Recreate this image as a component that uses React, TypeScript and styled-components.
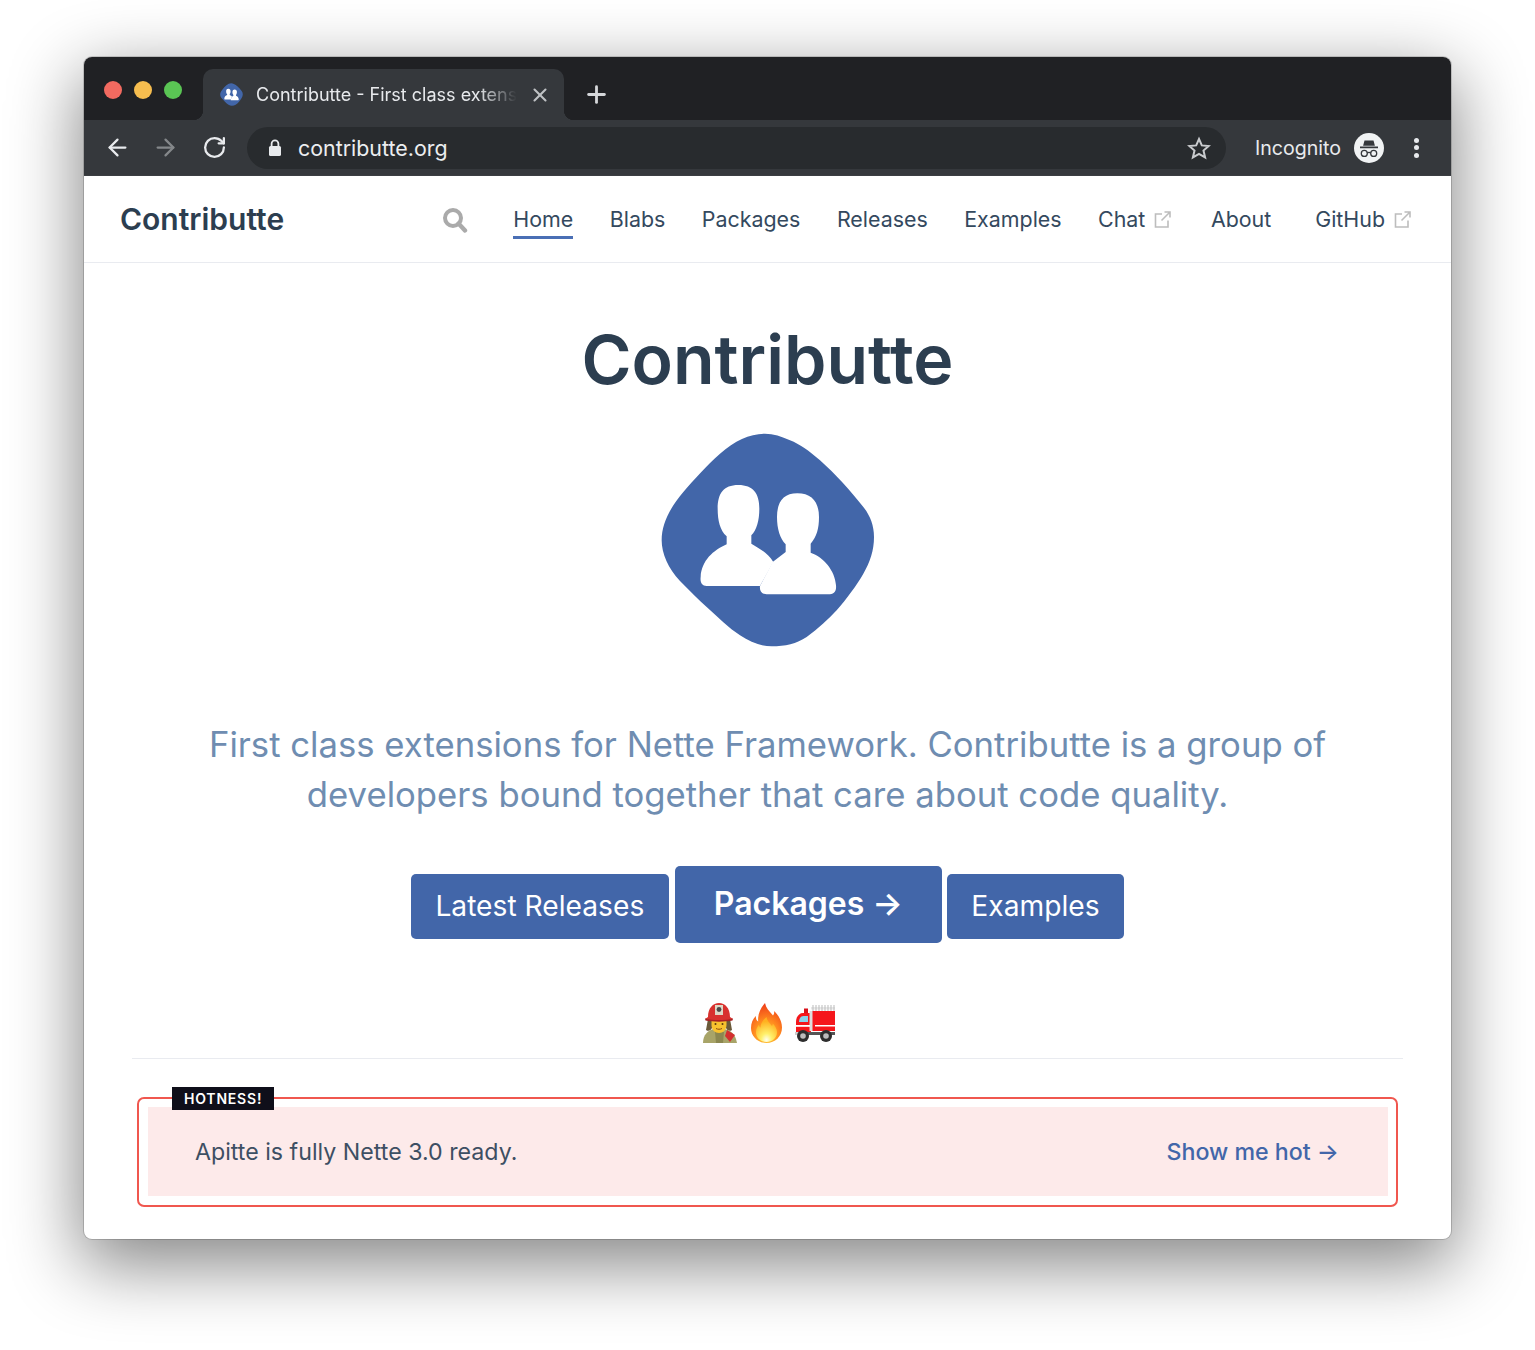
import React from "react";
import styled, { createGlobalStyle } from "styled-components";
import { ArrowLeft, ArrowRight, RotateCw, Plus, X } from "lucide-react";

const Global = createGlobalStyle`
  html, body { margin: 0; padding: 0; background: #fff; }
  body { font-family: Inter, "Noto Sans", sans-serif; overflow: hidden; -webkit-font-smoothing: antialiased; }
  * { box-sizing: border-box; }
`;

const Page = styled.div`
  width: 1535px;
  height: 1350px;
  padding: 57px 84px 0;
  overflow: hidden;
`;
const BrowserWindow = styled.div`
  width: 1367px;
  height: 1182px;
  border-radius: 8px;
  background: #fff;
  box-shadow: 0 22px 70px 4px rgba(0, 0, 0, 0.48), 0 0 0 1px rgba(0, 0, 0, 0.16);
  overflow: hidden;
`;
const TabStrip = styled.div`
  height: 63px;
  background: #202124;
  display: flex;
  align-items: flex-end;
  padding-left: 20px;
`;
const Lights = styled.div`
  display: flex;
  gap: 12px;
  align-self: flex-start;
  margin-top: 24px;
  margin-right: 21px;
`;
const Light = styled.span<{ $c: string }>`
  width: 18px;
  height: 18px;
  border-radius: 50%;
  background: ${(p) => p.$c};
`;
const Tab = styled.div`
  position: relative;
  width: 361px;
  height: 51px;
  background: #35383c;
  border-radius: 10px 10px 0 0;
  display: flex;
  align-items: center;
  padding: 0 13px 0 17px;
  color: #e8eaed;
  &::before, &::after {
    content: "";
    position: absolute;
    bottom: 0;
    width: 10px;
    height: 10px;
  }
  &::before { left: -10px; background: radial-gradient(circle at 0 0, #202124 10px, #35383c 10.5px); }
  &::after { right: -10px; background: radial-gradient(circle at 100% 0, #202124 10px, #35383c 10.5px); }
`;
const TabTitle = styled.span`
  margin-left: 13px;
  font-size: 18px;
  white-space: nowrap;
  -webkit-mask-image: linear-gradient(to right, #000 85%, transparent 100%);
  mask-image: linear-gradient(to right, #000 85%, transparent 100%);
`;
const TabClose = styled(X)`
  margin-left: auto;
  color: #bfc1c4;
`;
const NewTab = styled.div`
  margin-left: 19px;
  align-self: flex-start;
  margin-top: 24px;
  color: #d5d7da;
  display: flex;
`;
const Toolbar = styled.div`
  height: 56px;
  background: #35383c;
  display: flex;
  align-items: center;
  padding: 0 21px 0 20px;
  color: #e8eaed;
  border-bottom: 1px solid #3b3e42;
`;
const NavIcons = styled.div`
  display: flex;
  gap: 21px;
  align-items: center;
  margin-right: 20px;
`;
const Reload = styled(RotateCw)`
  margin-left: 2px;
`;
const Omnibox = styled.div`
  width: 979px;
  height: 42px;
  border-radius: 21px;
  background: #282b2e;
  display: flex;
  align-items: center;
  padding: 0 15px 0 21px;
  font-size: 21.4px;
  color: #eceef0;
`;
const Url = styled.span`
  margin-left: 16px;
  flex: 1;
`;
const Incognito = styled.div`
  margin-left: 29px;
  display: flex;
  align-items: center;
  font-size: 19.6px;
  color: #e8eaed;
  gap: 13px;
`;
const Dots = styled.div`
  margin-left: 30px;
  display: flex;
  flex-direction: column;
  gap: 2.5px;
  & > span { width: 5px; height: 5px; border-radius: 50%; background: #e8eaed; }
`;
const Nav = styled.nav`
  height: 87px;
  display: flex;
  align-items: center;
  padding: 0 40px 0 36px;
  border-bottom: 1px solid #e9ebf0;
  color: #2d3e50;
`;
const Brand = styled.div`
  font-size: 30px;
  font-weight: 600;
  color: #2c3e50;
  margin-right: auto;
`;
const SearchBtn = styled.div`
  display: flex;
  margin-right: 45px;
  padding-top: 2px;
`;
const NavLinks = styled.div`
  display: flex;
  align-items: center;
`;
const NavLink = styled.a<{ $active?: boolean; $gap?: number }>`
  position: relative;
  font-size: 21.4px;
  color: #34495e;
  margin-right: ${(p) => p.$gap ?? 36.5}px;
  display: flex;
  align-items: center;
  gap: 9px;
  ${(p) =>
    p.$active &&
    `&::after { content: ""; position: absolute; left: 0; right: 0; bottom: -7px; height: 3px; background: #4a6fb5; }`}
`;
const Main = styled.main`
  padding: 55.5px 48px 0;
  text-align: center;
`;
const Title = styled.h1`
  margin: 0;
  font-size: 68px;
  line-height: 80px;
  font-weight: 600;
  color: #2c3e50;
`;
const LogoWrap = styled.div`
  display: flex;
  justify-content: center;
  margin-top: 33px;
`;
const Lead = styled.p`
  margin: 71.5px 0 0;
  font-size: 34.7px;
  line-height: 50px;
  color: #6f8db1;
`;
const Actions = styled.div`
  display: flex;
  justify-content: center;
  align-items: center;
  gap: 6px;
  margin-top: 47px;
`;
const Button = styled.a<{ $big?: boolean }>`
  background: #4266a9;
  color: #fff;
  border-radius: 5px;
  display: flex;
  align-items: center;
  height: ${(p) => (p.$big ? 77 : 65)}px;
  padding: 0 ${(p) => (p.$big ? 39 : 24.5)}px 2px;
  margin: 0 ${(p) => (p.$big ? -1 : 0)}px ${(p) => (p.$big ? 4 : 0)}px 0;
  font-size: ${(p) => (p.$big ? 32 : 28.2)}px;
  font-weight: ${(p) => (p.$big ? 600 : 400)};
`;
const Emojis = styled.div`
  display: flex;
  justify-content: center;
  gap: 11px;
  margin-top: 56px;
  padding: 0 0 15px 2px;
  border-bottom: 1px solid #e9ebf0;
`;
const Hot = styled.section`
  position: relative;
  margin: 38px 5px 0;
  height: 110px;
  border: 2px solid #f0574f;
  border-radius: 7px;
  padding: 8px 8px 8px 9px;
`;
const Badge = styled.span`
  position: absolute;
  left: 33px;
  top: -12px;
  background: #0f0f1a;
  color: #fff;
  font-size: 14px;
  font-weight: 600;
  letter-spacing: 0.8px;
  height: 23px;
  padding: 0 12px;
  display: flex;
  align-items: center;
`;
const HotBody = styled.div`
  height: 89px;
  background: #fdeaea;
  display: flex;
  align-items: center;
  justify-content: space-between;
  padding: 0 49px 0 47px;
  font-size: 23.2px;
  color: #3d4f63;
`;
const HotLink = styled.a`
  color: #4266a9;
  font-weight: 500;
`;

const Logo = ({ size, fill = "#4266a9" }: { size: number; fill?: string }) => (
  <svg width={size} height={size} viewBox="60 35 648 648">
    <path
      fill={fill}
      d="M375 40C330 40 285 60 240 100C200 135 160 180 130 215C90 262 65 310 65 360C65 400 85 445 120 482C150 512 175 538 200 560C235 592 265 622 300 645C330 665 360 678 395 678C435 678 470 670 500 650C535 625 565 597 590 570C620 535 650 495 670 460C690 425 702 390 702 350C702 315 690 285 670 260C630 210 585 160 540 120C505 90 480 72 450 60C425 48 400 40 375 40Z"
    />
    <path
      fill="#fff"
      d="M295 194C340 194 358 220 358 265C358 300 350 330 334 345L334 370C360 385 385 400 400 425L360 497L200 497C185 497 180 485 182 470C185 420 220 390 260 372L260 348C240 330 233 300 233 265C233 220 250 194 295 194Z"
    />
    <path
      fill="#fff"
      d="M472 219C515 219 537 245 537 290C537 325 530 350 512 370L512 397C550 410 585 450 588 495C590 515 580 522 565 522L380 522C365 522 358 512 360 497L398 425L437 395L437 372C420 355 411 325 411 290C411 245 430 219 472 219Z"
    />
  </svg>
);

const LockIcon = () => (
  <svg width="14" height="18" viewBox="0 0 14 18">
    <path fill="none" stroke="#e8eaed" strokeWidth="1.8" d="M3.6 8V4.8a3.4 3.4 0 0 1 6.8 0V8" />
    <rect x="1" y="7" width="12" height="10" rx="1.6" fill="#e8eaed" />
  </svg>
);

const StarIcon = () => (
  <svg width="24" height="24" viewBox="0 0 24 24" fill="none" stroke="#c8cacd" strokeWidth="2" strokeLinejoin="miter">
    <path d="M12 3l2.800 6.400 6.900.6-5.200 4.600 1.600 6.800L12 17.800l-6.100 3.600 1.600-6.800L2.300 10l6.900-.6z" />
  </svg>
);

const SearchIcon = () => (
  <svg width="26" height="26" viewBox="0 0 26 26" fill="none" stroke="#aaaaaa">
    <circle cx="11" cy="11" r="8" strokeWidth="4" />
    <path d="M16.5 16.5L23 23.5" strokeWidth="4.4" strokeLinecap="round" />
  </svg>
);

const ExtIcon = () => (
  <svg width="17" height="17" viewBox="0 0 17 17" fill="none" stroke="#bdbdbd" strokeWidth="1.6">
    <path d="M8 3H1.500V16H14V9.500" />
    <path d="M7.500 9.500L15.500 1.500M10.500 1H16V6.500" />
  </svg>
);

const IncognitoIcon = () => (
  <svg width="30" height="30" viewBox="0 0 30 30">
    <circle cx="15" cy="15" r="15" fill="#f1f3f4" />
    <path fill="#35383c" d="M10.500 7.500h9l1.400 5.200H9.100zM6 13.600h18v1.600H6z" />
    <g fill="none" stroke="#35383c" strokeWidth="1.3">
      <circle cx="10.300" cy="20.400" r="3" />
      <circle cx="19.700" cy="20.400" r="3" />
      <path d="M13.300 20c1-.7 2.400-.7 3.400 0" />
    </g>
  </svg>
);

const Firefighter = () => (
  <svg width="36" height="40" viewBox="0 0 36 40">
    <path fill="#6b5a3a" d="M6 16h22l2 11c-3 2-5 0-6-2H10c-1 2-3 4-6 2z" />
    <path fill="#a8a468" d="M1 40c0-8 5-13 11-14h10c6 1 10 4 12 10l1 4z" />
    <path fill="#8b8750" d="M13 29h9l-1 11h-7z" />
    <path fill="#d32f2f" d="M25 27l8 5-5 7-5-6z" />
    <path fill="#f8c22e" d="M9.500 17h15v5c0 5-3.500 8-7.500 8s-7.500-3-7.500-8z" />
    <circle cx="13.500" cy="21" r="1" fill="#5b3a10" />
    <circle cx="20.500" cy="21" r="1" fill="#5b3a10" />
    <path d="M14 25.500c2 1 4 1 6 0" fill="none" stroke="#8a4b10" strokeWidth="1" />
    <path fill="#d8322f" d="M6 14C6 5 11 0 17 0s11 5 11 14l3 2c-6 2-22 2-28 0z" />
    <path fill="#a92222" d="M3 15.500c7 2 21 2 28 0l-.5 2c-7 1.500-20 1.500-27 0z" />
    <path fill="#ddd8c6" d="M13 2h8v10h-8z" />
    <circle cx="17" cy="6.500" r="2.400" fill="#4a4a4a" />
  </svg>
);

const Fire = () => (
  <svg width="35" height="40" viewBox="0 0 35 40">
    <defs>
      <radialGradient id="fireOuter" cx="50%" cy="85%" r="85%">
        <stop offset="0" stopColor="#ffd23a" />
        <stop offset=".5" stopColor="#ff8a1e" />
        <stop offset="1" stopColor="#ee3a1a" />
      </radialGradient>
      <radialGradient id="fireInner" cx="50%" cy="92%" r="75%">
        <stop offset="0" stopColor="#fffff0" />
        <stop offset=".35" stopColor="#fff06a" />
        <stop offset="1" stopColor="#ffb01f" />
      </radialGradient>
    </defs>
    <path
      fill="url(#fireOuter)"
      d="M16 0c1 5 4 8 8 12.500 1-1 1.500-3 1-4.500 4.500 4 8 10 8 16.500C33 33.500 26 40 17.500 40 9 40 2 33.500 2 25c0-5 1.800-9 4.800-12 0 3 1 5 2.400 5.500C8.500 11 11.500 5 16 0z"
    />
    <path
      fill="url(#fireInner)"
      d="M17.500 14c.5 4 3.500 6 5.500 9 .5-.7.8-1.600.7-2.600 2.300 2.300 4.300 5.400 4.300 8.600 0 6-4.700 10-10.500 10S7 35 7 29c0-3 1.300-5.500 3-7.300.2 1.500.7 2.500 1.500 2.900C11.300 20.500 14 17 17.500 14z"
    />
  </svg>
);

const Truck = () => (
  <svg width="40" height="40" viewBox="0 -2 40 40">
    <path fill="#e8e8e8" d="M16 2h24v2.500H16z" />
    <path stroke="#bbb" strokeWidth="1" d="M18 0v6M21 0v6M24 0v6M27 0v6M30 0v6M33 0v6M36 0v6M39 0v6" />
    <path fill="#f5161b" d="M15 6h25v20H15z" />
    <path fill="#f5161b" d="M1 28V17c0-5 3-9 7-9h8v20z" />
    <path fill="#d8101a" d="M9 3.500h4V8H9z" />
    <path fill="#8ad2ea" d="M4 17c0-3 1.500-6 4.500-6H13v6z" />
    <path fill="#dcdcdc" d="M14.500 6h3v20h-3z" />
    <path fill="#fff" d="M1 20h14v1.800H1z" />
    <path fill="#fff" d="M20 20h20v1.500H20z" />
    <path fill="#555" d="M1 27h39v3H1z" />
    <path fill="#cfcfcf" d="M0 27h5v3H0z" />
    <circle cx="8" cy="31" r="6" fill="#2d2d2d" />
    <circle cx="8" cy="31" r="2.800" fill="#bbb" />
    <circle cx="31" cy="31" r="6" fill="#2d2d2d" />
    <circle cx="31" cy="31" r="2.800" fill="#bbb" />
  </svg>
);

export default function App() {
  return (
    <Page>
      <Global />
      <BrowserWindow>
        <TabStrip>
          <Lights>
            <Light $c="#f26a60" />
            <Light $c="#f6bd4f" />
            <Light $c="#5ac554" />
          </Lights>
          <Tab>
            <Logo size={23} />
            <TabTitle>Contributte - First class extens</TabTitle>
            <TabClose size={22} strokeWidth={2.3} />
          </Tab>
          <NewTab>
            <Plus size={27} strokeWidth={2.5} />
          </NewTab>
        </TabStrip>
        <Toolbar>
          <NavIcons>
            <ArrowLeft size={27} strokeWidth={2} />
            <ArrowRight size={27} strokeWidth={2} color="#84878a" />
            <Reload size={25} strokeWidth={2.2} />
          </NavIcons>
          <Omnibox>
            <LockIcon />
            <Url>contributte.org</Url>
            <StarIcon />
          </Omnibox>
          <Incognito>
            Incognito
            <IncognitoIcon />
          </Incognito>
          <Dots>
            <span />
            <span />
            <span />
          </Dots>
        </Toolbar>
        <Nav>
          <Brand>Contributte</Brand>
          <SearchBtn>
            <SearchIcon />
          </SearchBtn>
          <NavLinks>
            <NavLink $active>Home</NavLink>
            <NavLink>Blabs</NavLink>
            <NavLink>Packages</NavLink>
            <NavLink>Releases</NavLink>
            <NavLink>Examples</NavLink>
            <NavLink $gap={39.5}>
              Chat <ExtIcon />
            </NavLink>
            <NavLink $gap={44}>About</NavLink>
            <NavLink $gap={0}>
              GitHub <ExtIcon />
            </NavLink>
          </NavLinks>
        </Nav>
        <Main>
          <Title>Contributte</Title>
          <LogoWrap>
            <Logo size={216} />
          </LogoWrap>
          <Lead>
            First class extensions for Nette Framework. Contributte is a group of
            <br />
            developers bound together that care about code quality.
          </Lead>
          <Actions>
            <Button>Latest Releases</Button>
            <Button $big>Packages →</Button>
            <Button>Examples</Button>
          </Actions>
          <Emojis>
            <Firefighter />
            <Fire />
            <Truck />
          </Emojis>
          <Hot>
            <Badge>HOTNESS!</Badge>
            <HotBody>
              <span>Apitte is fully Nette 3.0 ready.</span>
              <HotLink>Show me hot →</HotLink>
            </HotBody>
          </Hot>
        </Main>
      </BrowserWindow>
    </Page>
  );
}
